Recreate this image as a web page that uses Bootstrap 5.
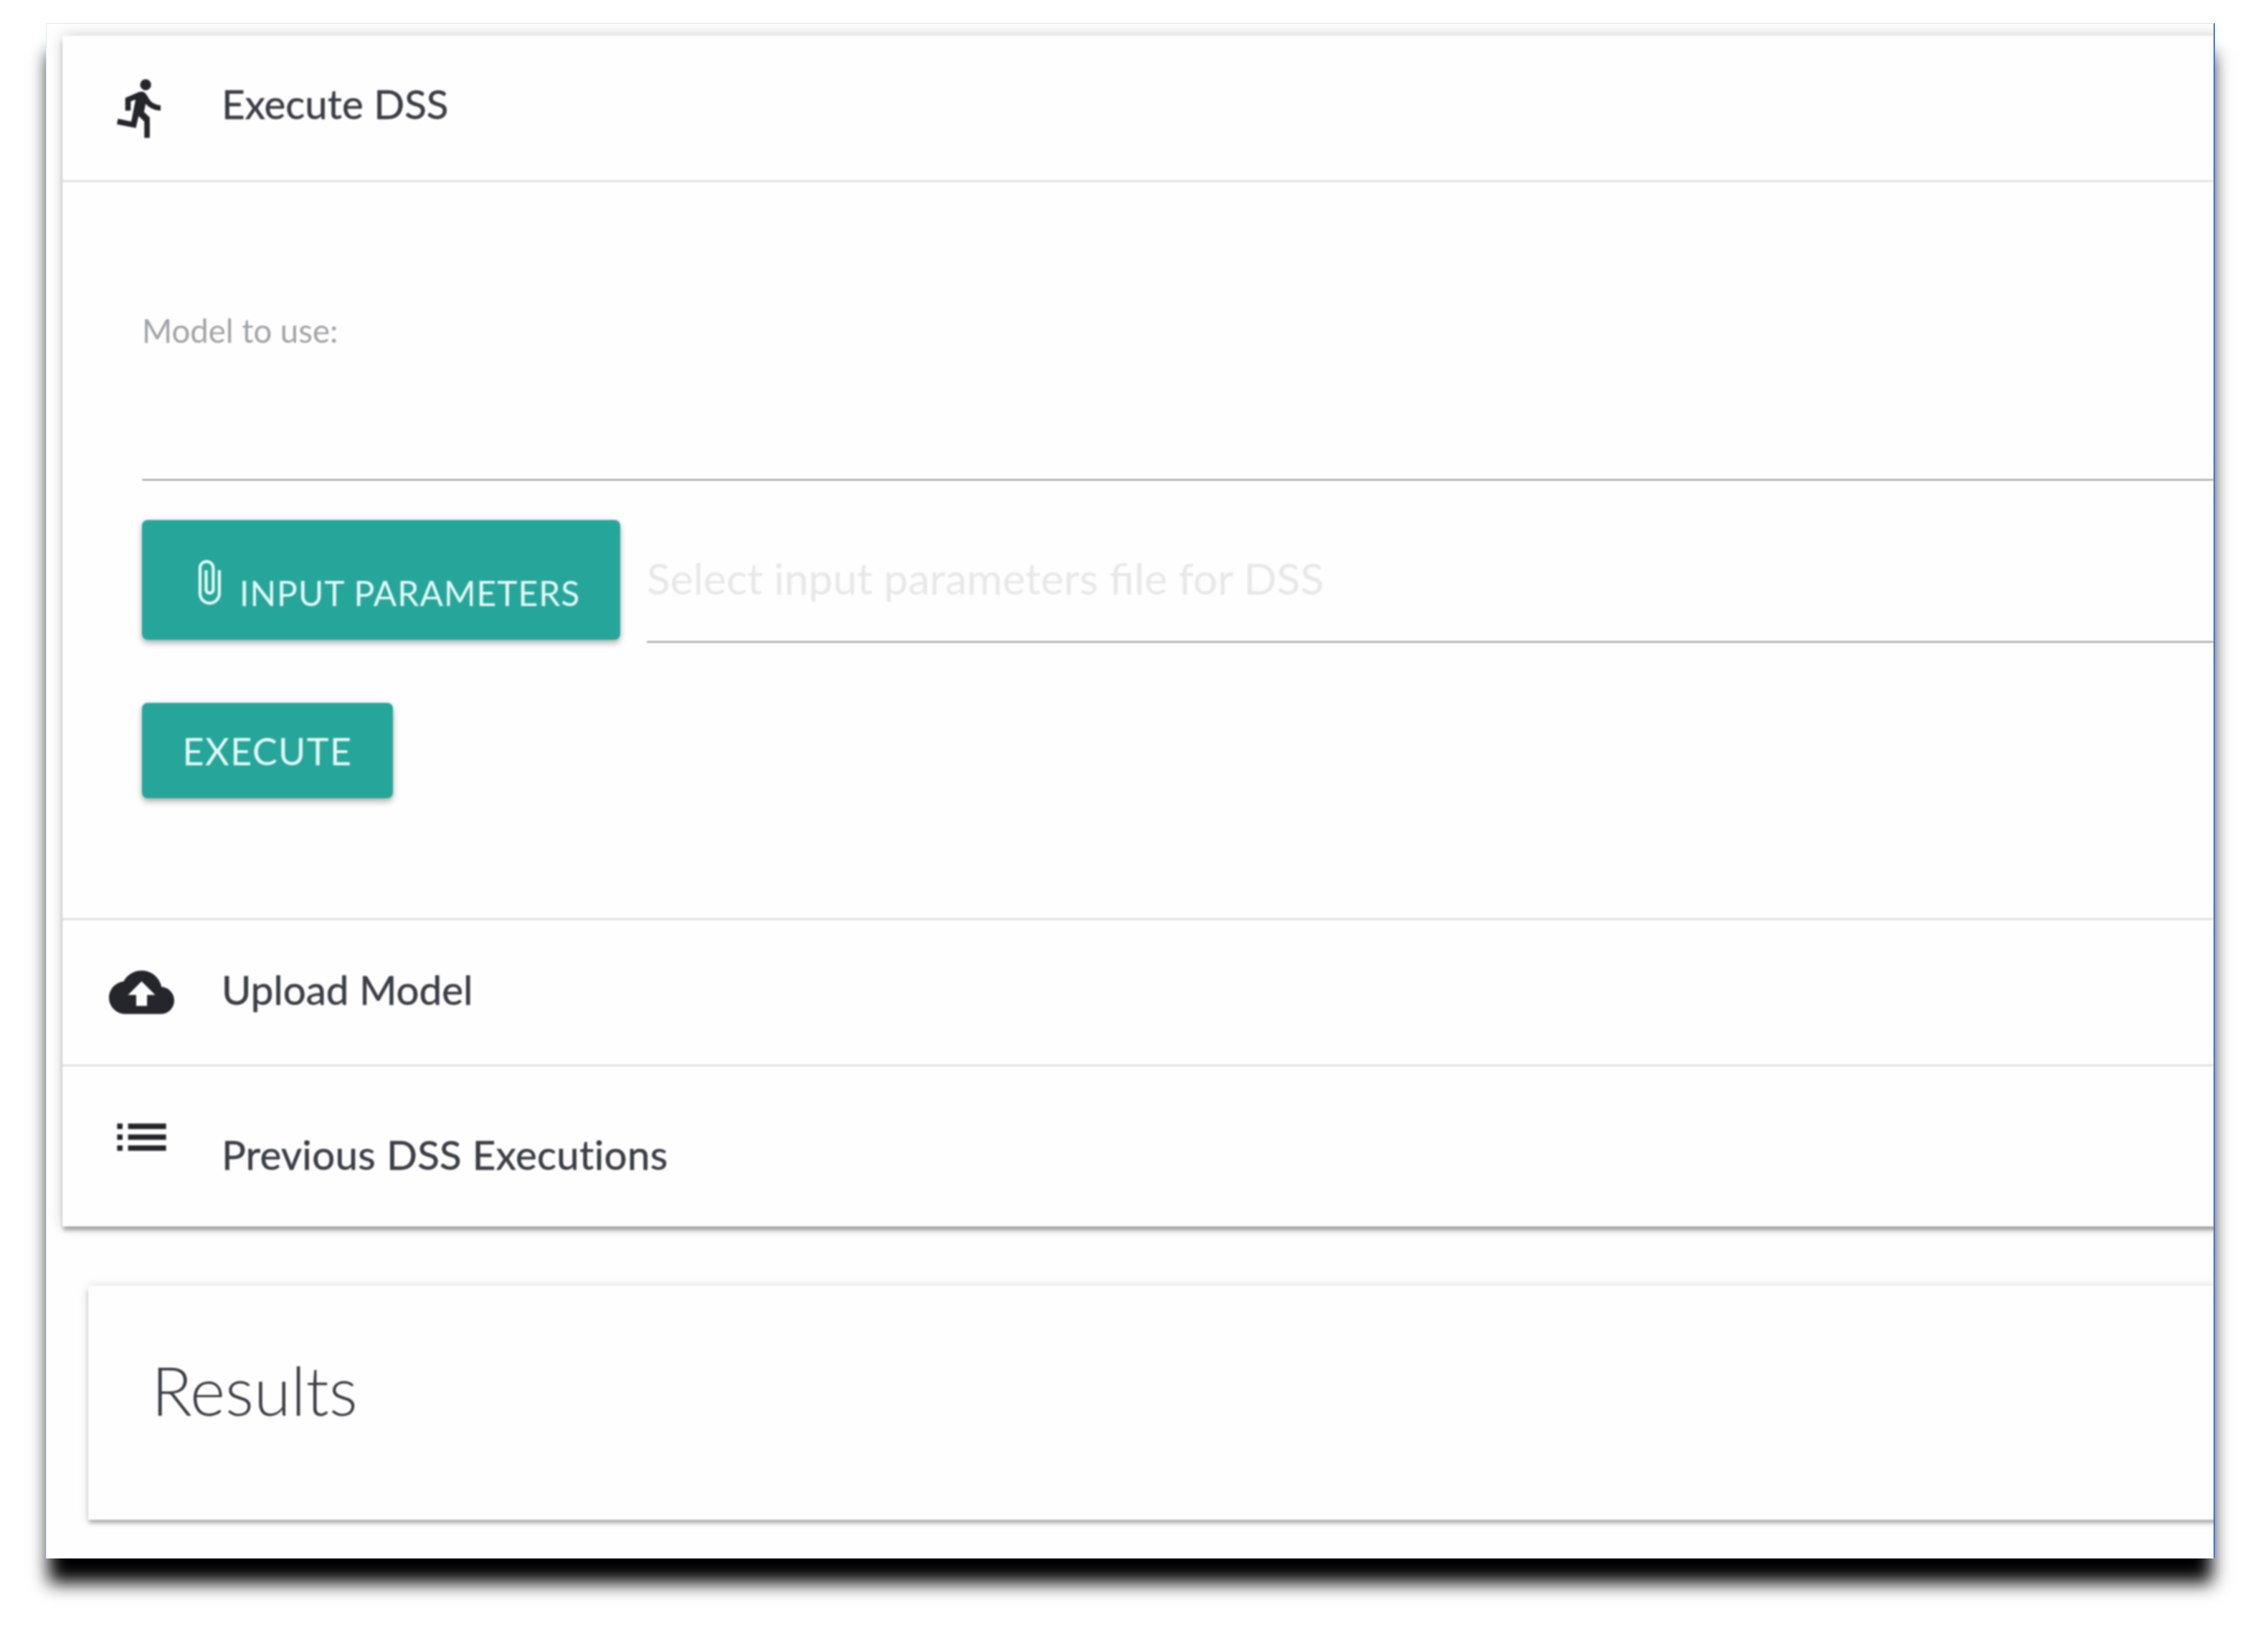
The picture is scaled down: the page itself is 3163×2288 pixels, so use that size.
<!DOCTYPE html>
<html lang="en">
<head>
<meta charset="utf-8">
<title>Execute DSS</title>
<link href="https://cdn.jsdelivr.net/npm/bootstrap@5.3.0/dist/css/bootstrap.min.css" rel="stylesheet">
<style>
html,body{background:#fff;height:100%;overflow:hidden}
body{font-family:"Lato","Liberation Sans",sans-serif;color:#3b3e46;padding:32px 0 0 64px}
.shot-window{width:3025px;height:2141px;background:#fefefe;border-top:1px solid #dfe7f6;border-left:1px solid #dfe7f6;border-bottom:1px solid #dfe7f6;border-right:2px solid #4a74cf;box-shadow:0 38px 24px -4px #000;overflow:hidden}
.acc-panel{margin:17px -60px 0 22px;background:#fefefe;border-radius:0;border:0;box-shadow:0 0 18px rgba(0,0,0,.2),0 6px 6px -1px rgba(0,0,0,.34);filter:blur(1px)}
.acc-head{font-size:56.5px;line-height:60px;border-bottom:3px solid #e2e2e2;padding-left:65px;gap:66px}
.acc-head span{-webkit-text-stroke:.5px #3b3e46}
.acc-head svg{width:91px;height:91px;flex:none;fill:#24262b}
.head-one{height:204px}
.head-one span{margin-top:-13px}
.head-two span{margin-top:-10px}
.head-two{height:204px}
.head-three{height:223px;border-bottom:0;align-items:flex-start!important}
.head-three svg{margin-top:53px}
.head-three span{margin-top:92px;letter-spacing:.3px}
.acc-body{height:1029px;border-bottom:3px solid #e2e2e2;padding-left:111px}
.model-label{font-size:45.5px;line-height:60px;color:#a0a3a8;margin-top:177px}
.model-select{height:179px;border-bottom:2px solid #9b9b9b}
.teal-btn{background:#26a69a;color:#e4f8f5;border:0;border-radius:8px;line-height:1;text-transform:uppercase;box-shadow:0 5px 8px rgba(0,0,0,.28),0 0 6px rgba(0,0,0,.08)}
.teal-btn:hover{background:#26a69a;color:#e4f8f5}
.btn-params{width:667px;height:167px;margin-top:55px;gap:9px;padding:0 0 0 59px;font-size:48px;letter-spacing:1px}
.btn-params span{margin-top:36px}
.btn-params svg{width:68px;height:68px;fill:#e4f8f5;flex:none;margin-top:6px}
.btn-run{width:350px;height:133px;margin-top:84px;padding:0;font-size:52px;letter-spacing:1.5px}
.file-field{height:151px;margin:75px 0 0 37px;border-bottom:2px solid #9b9b9b}
.file-field input{width:100%;height:100%;border:0;outline:0;background:transparent;padding:0 0 28px;font-size:60.6px;font-family:inherit}
.file-field input::placeholder{color:#e8e8e8;opacity:1}
.results-box{margin:83px -60px 0 58px;height:326px;background:#fefefe;box-shadow:0 0 14px rgba(0,0,0,.14),0 5px 6px -1px rgba(0,0,0,.32);padding:98px 0 0 88px;filter:blur(1px)}
.results-box h2{font-size:94px;font-weight:300;line-height:1;margin:0;color:#3b3e46}
</style>
</head>
<body>
<main class="shot-window">
  <section class="card acc-panel">
    <div class="acc-head head-one d-flex align-items-center">
      <svg viewBox="0 0 24 24"><path d="M13.49 5.48c1.1 0 2-.9 2-2s-.9-2-2-2-2 .9-2 2 .9 2 2 2zm-3.6 13.9l1-4.4 2.1 2v6h2v-7.5l-2.1-2 .6-3c1.3 1.5 3.3 2.5 5.5 2.5v-2c-1.9 0-3.5-1-4.3-2.4l-1-1.6c-.4-.6-1-1-1.7-1-.3 0-.5.1-.8.1l-5.2 2.2v4.7h2v-3.4l1.8-.7-1.6 8.1-4.9-1-.4 2 7 1.4z"/></svg>
      <span>Execute DSS</span>
    </div>
    <div class="acc-body">
      <div class="model-label">Model to use:</div>
      <div class="model-select"></div>
      <div class="d-flex">
        <button type="button" class="btn teal-btn btn-params d-flex align-items-center flex-shrink-0">
          <svg viewBox="0 0 24 24"><path d="M16.5 6v11.5c0 2.21-1.79 4-4 4s-4-1.79-4-4V5c0-1.38 1.12-2.5 2.5-2.5s2.5 1.12 2.5 2.5v10.5c0 .55-.45 1-1 1s-1-.45-1-1V6H10v9.5c0 1.38 1.12 2.5 2.5 2.5s2.5-1.12 2.5-2.5V5c0-2.21-1.79-4-4-4S7 2.79 7 5v12.5c0 3.04 2.46 5.5 5.5 5.5s5.5-2.46 5.5-5.5V6h-1.5z"/></svg>
          <span>Input Parameters</span>
        </button>
        <div class="file-field flex-grow-1"><input type="text" placeholder="Select input parameters file for DSS" aria-label="Input parameters file"></div>
      </div>
      <button type="button" class="btn teal-btn btn-run d-block">Execute</button>
    </div>
    <div class="acc-head head-two d-flex align-items-center">
      <svg viewBox="0 0 24 24"><path d="M19.35 10.04C18.67 6.59 15.64 4 12 4 9.11 4 6.6 5.64 5.35 8.04 2.34 8.36 0 10.91 0 14c0 3.31 2.69 6 6 6h13c2.76 0 5-2.24 5-5 0-2.64-2.05-4.78-4.65-4.96zM14 13v4h-4v-4H7l5-5 5 5h-3z"/></svg>
      <span>Upload Model</span>
    </div>
    <div class="acc-head head-three d-flex align-items-center">
      <svg viewBox="0 0 24 24"><path d="M3 13h2v-2H3v2zm0 4h2v-2H3v2zm0-8h2V7H3v2zm4 4h14v-2H7v2zm0 4h14v-2H7v2zM7 7v2h14V7H7z"/></svg>
      <span>Previous DSS Executions</span>
    </div>
  </section>
  <section class="results-box"><h2>Results</h2></section>
</main>
<script src="https://cdn.jsdelivr.net/npm/bootstrap@5.3.0/dist/js/bootstrap.bundle.min.js"></script>
</body>
</html>
